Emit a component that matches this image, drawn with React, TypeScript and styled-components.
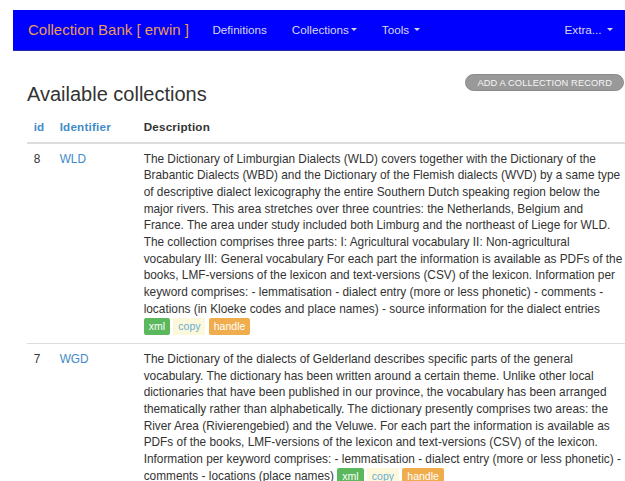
import styled, { createGlobalStyle } from 'styled-components'

const GlobalStyle = createGlobalStyle`
    html, body {
        margin: 0;
        padding: 0;
        background: #fff;
        overflow: hidden;
    }
    body {
        font-family: "Liberation Sans", Arial, Helvetica, sans-serif;
        font-size: 11.67px;
        line-height: 16.67px;
        color: #333;
    }
`

const Page = styled.div`
    padding: 10px 0 0 13px;
`

const Navbar = styled.nav`
    display: flex;
    align-items: center;
    height: 40px;
    background-color: #0000ff;
    border-bottom: 1px solid #2a2aa8;
`

const Brand = styled.a`
    padding: 0 11px 0 15px;
    font-size: 15px;
    color: #e99c52;
    text-decoration: none;
`

const NavLink = styled.a<{ $right?: boolean }>`
    display: flex;
    align-items: center;
    padding: 0 12.5px;
    margin-left: ${props => props.$right ? 'auto' : '0'};
    color: #d8d8e8;
    text-decoration: none;
`

const Caret = styled.span<{ $gap: number }>`
    display: inline-block;
    margin-left: ${props => props.$gap}px;
    width: 0;
    height: 0;
    border-top: 3.5px solid #d8d8e8;
    border-left: 3.5px solid transparent;
    border-right: 3.5px solid transparent;
`

// the content column runs a little past the window's right edge
const Content = styled.div`
    padding-left: 14px;
    margin-right: -5px;
`

const Header = styled.div`
    display: flex;
    justify-content: space-between;
    align-items: flex-start;
    padding: 23px 5px 0 0;
    height: 38px;
`

const Title = styled.h3`
    margin: 9px 0 0;
    font-size: 20px;
    line-height: 22px;
    font-weight: 400;
    color: #333;
`

const AddButton = styled.button`
    height: 17px;
    padding: 0 11px;
    margin-right: 1px;
    border: 1px solid #8a8a8a;
    border-radius: 9px;
    background: #999;
    color: #f6f6f6;
    font-family: inherit;
    font-size: 9.3px;
    text-transform: uppercase;
    letter-spacing: 0.1px;
`

const Table = styled.table`
    width: 100%;
    border-collapse: collapse;
    table-layout: fixed;
`

const Col = styled.col<{ $w?: number }>`
    width: ${props => props.$w ? `${props.$w}px` : 'auto'};
`

const Th = styled.th<{ $link?: boolean }>`
    padding: 6.67px;
    text-align: left;
    font-weight: 700;
    color: ${props => props.$link ? '#428bca' : '#333'};
    border-bottom: 2px solid #ddd;
    letter-spacing: 0.2px;
`

const Td = styled.td<{ $link?: boolean }>`
    padding: 6.67px 6.67px 8.5px;
    vertical-align: top;
    font-size: 11.85px;
    color: ${props => props.$link ? '#428bca' : '#333'};
    border-bottom: 1px solid #ddd;
`

const Label = styled.span<{ $kind: 'xml' | 'copy' | 'handle' }>`
    display: inline-block;
    padding: 0 5px;
    line-height: 17px;
    font-size: 10.5px;
    border-radius: ${props => props.$kind === 'copy' ? '0' : '2px'};
    color: ${props => props.$kind === 'copy' ? '#69acd4' : '#fff'};
    background: ${props => ({ xml: '#5cb85c', copy: '#fbf8dc', handle: '#f0ad4e' })[props.$kind]};
    vertical-align: middle;
`

type Collection = {
    id: number
    identifier: string
    description: string
    linksOnNewLine: boolean
}

const collections: Collection[] = [
    {
        id: 8,
        identifier: 'WLD',
        description: 'The Dictionary of Limburgian Dialects (WLD) covers together with the Dictionary of the Brabantic Dialects (WBD) and the Dictionary of the Flemish dialects (WVD) by a same type of descriptive dialect lexicography the entire Southern Dutch speaking region below the major rivers. This area stretches over three countries: the Netherlands, Belgium and France. The area under study included both Limburg and the northeast of Liege for WLD. The collection comprises three parts: I: Agricultural vocabulary II: Non-agricultural vocabulary III: General vocabulary For each part the information is available as PDFs of the books, LMF-versions of the lexicon and text-versions (CSV) of the lexicon. Information per keyword comprises: - lemmatisation - dialect entry (more or less phonetic) - comments - locations (in Kloeke codes and place names) - source information for the dialect entries',
        linksOnNewLine: true
    },
    {
        id: 7,
        identifier: 'WGD',
        description: 'The Dictionary of the dialects of Gelderland describes specific parts of the general vocabulary. The dictionary has been written around a certain theme. Unlike other local dictionaries that have been published in our province, the vocabulary has been arranged thematically rather than alphabetically. The dictionary presently comprises two areas: the River Area (Rivierengebied) and the Veluwe. For each part the information is available as PDFs of the books, LMF-versions of the lexicon and text-versions (CSV) of the lexicon. Information per keyword comprises: - lemmatisation - dialect entry (more or less phonetic) - comments - locations (place names)',
        linksOnNewLine: false
    }
]

const Links = () => (
    <>
        <Label $kind="xml">xml</Label>{' '}
        <Label $kind="copy">copy</Label>{' '}
        <Label $kind="handle">handle</Label>
    </>
)

const App = () => {
    return (
        <Page>
            <GlobalStyle />
            <Navbar>
                <Brand>Collection Bank [ erwin ]</Brand>
                <NavLink>Definitions</NavLink>
                <NavLink>Collections<Caret $gap={2} /></NavLink>
                <NavLink>Tools<Caret $gap={5} /></NavLink>
                <NavLink $right>Extra...<Caret $gap={5} /></NavLink>
            </Navbar>
            <Content>
                <Header>
                    <Title>Available collections</Title>
                    <AddButton>Add a collection record</AddButton>
                </Header>
                <Table>
                    <colgroup>
                        <Col $w={26} />
                        <Col $w={84} />
                        <Col />
                    </colgroup>
                    <thead>
                        <tr>
                            <Th $link>id</Th>
                            <Th $link>Identifier</Th>
                            <Th>Description</Th>
                        </tr>
                    </thead>
                    <tbody>
                        {collections.map(c => (
                            <tr key={c.id}>
                                <Td>{c.id}</Td>
                                <Td $link>{c.identifier}</Td>
                                <Td>
                                    {c.description}
                                    {c.linksOnNewLine ? <br /> : ' '}
                                    <Links />
                                </Td>
                            </tr>
                        ))}
                    </tbody>
                </Table>
            </Content>
        </Page>
    )
}

export default App
